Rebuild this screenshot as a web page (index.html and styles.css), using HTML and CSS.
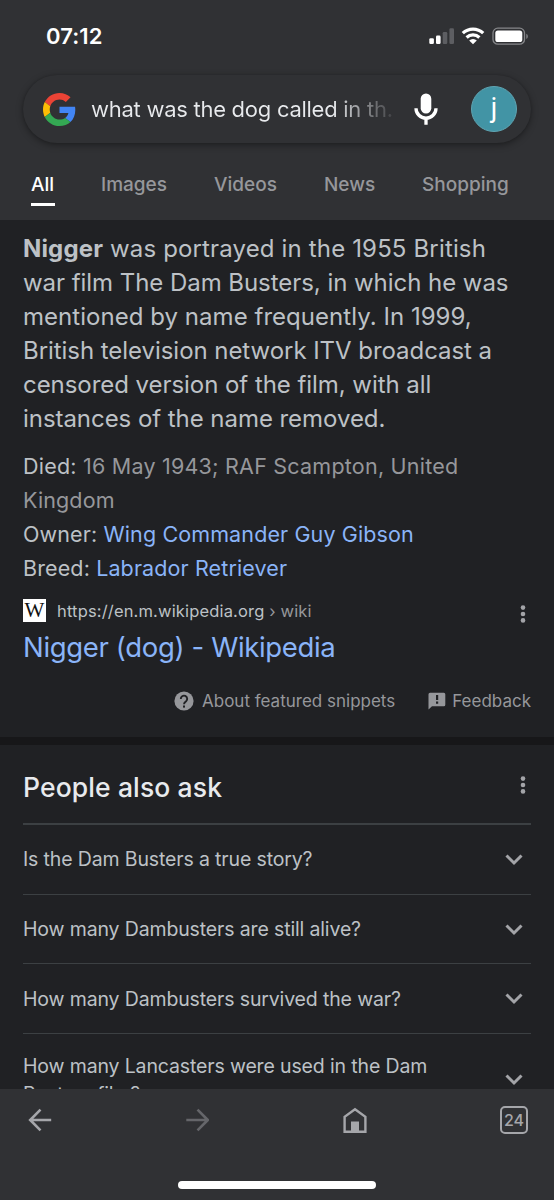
FILE: index.html
```html
<!DOCTYPE html>
<html lang="en">
<head>
<meta charset="utf-8">
<title>Search results</title>
<link rel="stylesheet" href="styles.css">
</head>
<body>
<div class="screen">
  <header class="top">
    <div class="status">
      <span class="time">07:12</span>
      <svg class="status-icons" width="100" height="20" viewBox="0 0 100 20">
        <g fill="#fff"><rect x="0.3" y="12.3" width="4.6" height="5.700" rx="1.3"/><rect x="7" y="9.6" width="4.6" height="8.4" rx="1.3"/></g>
        <g fill="#5d5e62"><rect x="13.7" y="6" width="4.6" height="12" rx="1.3"/><rect x="20.4" y="2.3" width="4.6" height="15.700" rx="1.3"/></g>
        <g fill="none" stroke="#fff" stroke-width="3.2"><path d="M33.8 7.2a14.6 14.6 0 0 1 20.4 0"/><path d="M37.6 11.5a9.2 9.2 0 0 1 12.8 0"/></g>
        <path d="M40.2 14.5a5.4 5.4 0 0 1 7.6 0L44 18.3z" fill="#fff"/>
        <rect x="64" y="2.2" width="31.5" height="16" rx="4.8" fill="none" stroke="#858689" stroke-width="1.3"/>
        <rect x="66.300" y="4.5" width="27" height="11.500" rx="2.600" fill="#fff"/>
        <path d="M97.3 7.700v5.3c2-.9 2-4.4 0-5.3z" fill="#858689"/>
      </svg>
    </div>
    <div class="search">
      <svg class="g-logo" width="33" height="33" viewBox="0 0 48 48">
        <path fill="#EA4335" d="M24 9.5c3.54 0 6.71 1.22 9.21 3.6l6.85-6.85C35.9 2.38 30.47 0 24 0 14.62 0 6.51 5.38 2.56 13.22l7.98 6.19C12.43 13.72 17.74 9.5 24 9.5z"/>
        <path fill="#4285F4" d="M46.98 24.55c0-1.57-.15-3.09-.38-4.55H24v9.02h12.94c-.58 2.96-2.26 5.48-4.78 7.18l7.73 6c4.51-4.18 7.09-10.36 7.09-17.65z"/>
        <path fill="#FBBC05" d="M10.53 28.59c-.48-1.45-.76-2.99-.76-4.59s.27-3.14.76-4.59l-7.98-6.19C.92 16.46 0 20.12 0 24c0 3.88.92 7.54 2.56 10.78l7.97-6.19z"/>
        <path fill="#34A853" d="M24 48c6.48 0 11.93-2.13 15.89-5.81l-7.73-6c-2.15 1.45-4.92 2.3-8.16 2.3-6.26 0-11.57-4.22-13.47-9.91l-7.98 6.19C6.51 42.62 14.62 48 24 48z"/>
      </svg>
      <span class="query">what was the dog called in th.</span>
      <svg class="mic" width="24" height="34" viewBox="0 0 24 34">
        <rect x="6.7" y="1.500" width="10.6" height="20" rx="5.3" fill="#fff"/>
        <path d="M2 16.2a10 10 0 0 0 20 0M12 26v6.800" fill="none" stroke="#fff" stroke-width="3.300"/>
      </svg>
      <span class="avatar">j</span>
    </div>
    <nav class="tabs">
      <span class="tab active">All</span>
      <span class="tab images">Images</span>
      <span class="tab videos">Videos</span>
      <span class="tab news">News</span>
      <span class="tab shopping">Shopping</span>
    </nav>
  </header>

  <main class="results">
    <section class="snippet">
      <p class="answer"><span class="lead"><b>Nigger</b> was portrayed in the 1955 British</span><br>war film The Dam Busters, in which he was<br><span class="loose">mentioned by name frequently. In 1999,</span><br>British television network ITV broadcast a<br>censored version of the film, with all<br>instances of the name removed.</p>
      <p class="facts"><span class="died">Died: <span class="dim">16 May 1943; RAF Scampton, United</span></span><br><span class="dim">Kingdom</span><br>Owner: <span class="link">Wing Commander Guy Gibson</span><br>Breed: <span class="link">Labrador Retriever</span></p>
      <div class="source">
        <span class="favicon"><span class="w">W</span></span>
        <span class="url">https://en.m.wikipedia.org <span class="dim">› wiki</span></span>
        <svg class="dots" width="6" height="20" viewBox="0 0 6 20" fill="#a3a4a8"><circle cx="3" cy="3.6" r="2.3"/><circle cx="3" cy="10" r="2.3"/><circle cx="3" cy="16.4" r="2.3"/></svg>
      </div>
      <div class="title">Nigger (dog) - Wikipedia</div>
      <div class="about">
        <svg width="20" height="20" viewBox="0 0 20 20"><circle cx="10" cy="10" r="9.6" fill="#96979b"/><path d="M6.8 8a3.2 3.2 0 1 1 5.3 2.3C10.7 11.3 10 11.800 10 13.300" fill="none" stroke="#202124" stroke-width="1.9"/><rect x="9" y="14.500" width="2" height="2.100" fill="#202124"/></svg>
        <span class="about-text">About featured snippets</span>
        <svg width="18" height="18" viewBox="0 0 18 18"><path d="M2 .8h13.8q1.500 0 1.500 1.500v10.500q0 1.500-1.500 1.500H4L.500 17.500V2.300Q.500.8 2 .8z" fill="#96979b"/><path d="M8 3h2.200v5H8zM8 9.500h2.200v2.200H8z" fill="#202124"/></svg>
        <span class="feedback">Feedback</span>
      </div>
    </section>

    <section class="paa">
      <div class="paa-head"><h2>People also ask</h2>
        <svg class="dots" width="6" height="20" viewBox="0 0 6 20" fill="#a3a4a8"><circle cx="3" cy="3.6" r="2.3"/><circle cx="3" cy="10" r="2.3"/><circle cx="3" cy="16.4" r="2.3"/></svg>
      </div>
      <div class="q"><span>Is the Dam Busters a true story?</span><svg class="chev" width="18" height="12" viewBox="0 0 18 12"><path d="M1.500 1.500L9 9l7.500-7.500"/></svg></div>
      <div class="q"><span>How many Dambusters are still alive?</span><svg class="chev" width="18" height="12" viewBox="0 0 18 12"><path d="M1.500 1.500L9 9l7.500-7.500"/></svg></div>
      <div class="q"><span>How many Dambusters survived the war?</span><svg class="chev" width="18" height="12" viewBox="0 0 18 12"><path d="M1.500 1.500L9 9l7.500-7.500"/></svg></div>
      <div class="q tall"><span>How many Lancasters were used in the Dam<br>Busters film?</span><svg class="chev" width="18" height="12" viewBox="0 0 18 12"><path d="M1.500 1.500L9 9l7.500-7.500"/></svg></div>
    </section>
  </main>

  <footer class="bottom">
    <div class="toolbar">
      <svg width="24" height="24" viewBox="0 0 24 24" fill="none" stroke="#a5a6aa" stroke-width="2.600"><path d="M23.200 12H2.500M12.500 1.700L2.200 12l10.300 10.300"/></svg>
      <svg width="24" height="24" viewBox="0 0 24 24" fill="none" stroke="#65666a" stroke-width="2.600"><path d="M1.300 12h21M12.500 1.700L22.800 12l-10.300 10.300"/></svg>
      <svg width="26" height="28" viewBox="0 0 26 28"><path d="M3.600 25.700V10.800L14 3.300l10.400 7.500v14.900z" fill="none" stroke="#a5a6aa" stroke-width="2.400"/><path d="M10 15.500h8V26h-8z" fill="#a5a6aa"/></svg>
      <span class="count">24</span>
    </div>
    <div class="home-bar"></div>
  </footer>
</div>
</body>
</html>
```
FILE: styles.css
```css
* { box-sizing: border-box; }
body {
  margin: 0;
  background: #202124;
  font-family: Inter, "Liberation Sans", sans-serif;
  color: #bdc1c6;
}
p, h2 { margin: 0; font-weight: 400; }
svg { display: block; flex: none; }
.screen {
  width: 554px;
  height: 1200px;
  display: flex;
  flex-direction: column;
  overflow: hidden;
  white-space: nowrap;
}
.top { flex: none; height: 220px; background: #303134; }
.status {
  height: 75px;
  padding: 0 26px 4px 46px;
  display: flex;
  align-items: center;
  justify-content: space-between;
}
.time { font-size: 22px; font-weight: 600; color: #fff; letter-spacing: 0.1px; }
.status-icons { margin-right: -1px; }
.search {
  height: 68px;
  margin: 0 23px;
  padding: 0 14px 0 20px;
  border-radius: 34px;
  display: flex;
  align-items: center;
  background: #303134;
  box-shadow: 0 2px 7px rgba(0, 0, 0, 0.38), 0 0 2px rgba(0, 0, 0, 0.12);
}
.query {
  width: 304px;
  margin-left: 15px;
  overflow: hidden;
  font-size: 22px;
  letter-spacing: -0.27px;
  line-height: 34px;
  color: transparent;
  background: linear-gradient(90deg, #e8eaed 240px, rgba(232, 234, 237, 0) 308px);
  background-clip: text;
  -webkit-background-clip: text;
}
.mic { margin-left: 19px; }
.avatar {
  width: 46px;
  height: 46px;
  margin-left: auto;
  border: 1px solid #5fa5b3;
  border-radius: 50%;
  background: #4294a5;
  color: #fff;
  font: 27px/43px Roboto, sans-serif;
  text-align: center;
}
.tabs {
  height: 77px;
  padding: 28px 0 0 31px;
  display: flex;
  align-items: flex-start;
  font-size: 19px;
  line-height: 28px;
  font-weight: 500;
  color: #96979b;
}
.tab.active { height: 35px; width: 24px; border-bottom: 3px solid #fff; color: #fff; }
.images { margin-left: 46px; width: 113px; }
.videos { width: 110px; }
.news { width: 98px; }
.results { flex: 1; min-height: 0; overflow: hidden; }
.snippet { height: 517px; padding: 12px 23px 0; }
.answer { font-size: 24px; line-height: 34.1px; letter-spacing: -0.05px; color: #bdc1c6; }
.answer b { font-weight: 700; }
.lead { letter-spacing: 0.15px; }
.loose { letter-spacing: 0.04px; }
.facts { margin-top: 12px; font-size: 21.5px; line-height: 34px; letter-spacing: 0.12px; }
.died { letter-spacing: 0.22px; }
.dim { color: #96979b; }
.link, .title { color: #8ab4f8; }
.source { height: 26px; margin-top: 13px; display: flex; align-items: center; }
.favicon {
  width: 23px;
  height: 23px;
  display: grid;
  place-items: center;
  overflow: hidden;
  background: #fff;
  color: #111;
  font: 21px/23px "Liberation Serif", serif;
}
.url { margin-left: 11px; font-size: 16.5px; letter-spacing: 0.16px; }
.dots { margin: 6px 5px 0 auto; }
.title { margin-top: 5px; font-size: 27.5px; line-height: 36px; letter-spacing: -0.34px; }
.about {
  margin-top: 24px;
  display: flex;
  align-items: center;
  justify-content: flex-end;
  font-size: 17px;
  line-height: 24px;
  color: #96979b;
}
.about-text { margin: 0 33px 0 8px; }
.feedback { margin-left: 6px; }
.paa { border-top: 8px solid #171719; padding: 0 23px; }
.paa-head { height: 80px; display: flex; align-items: center; border-bottom: 2px solid #3c4043; }
.paa-head h2 { padding-top: 5px; font-size: 26.5px; font-weight: 500; letter-spacing: 0.12px; color: #e8eaed; }
.paa-head .dots { margin-top: 1px; }
.q {
  height: 69.700px;
  display: flex;
  align-items: center;
  justify-content: space-between;
  border-bottom: 1.500px solid #3c4043;
  font-size: 19.500px;
  letter-spacing: -0.14px;
  line-height: 28px;
}
.q.tall { height: 91px; border: 0; }
.chev { margin: 1px 8px 0 0; fill: none; stroke: #a3a4a8; stroke-width: 3; }
.bottom { flex: none; height: 111px; background: #303134; }
.toolbar {
  height: 62px;
  padding: 0 26px 0 28px;
  display: flex;
  align-items: center;
  justify-content: space-between;
}
.count {
  width: 28px;
  height: 28px;
  border: 2px solid #a5a6aa;
  border-radius: 5px;
  font: 500 16px/24px Inter, sans-serif;
  text-align: center;
  color: #a5a6aa;
}
.home-bar { width: 198px; height: 8px; margin: 30px auto 0; border-radius: 4px; background: #fff; }
```
